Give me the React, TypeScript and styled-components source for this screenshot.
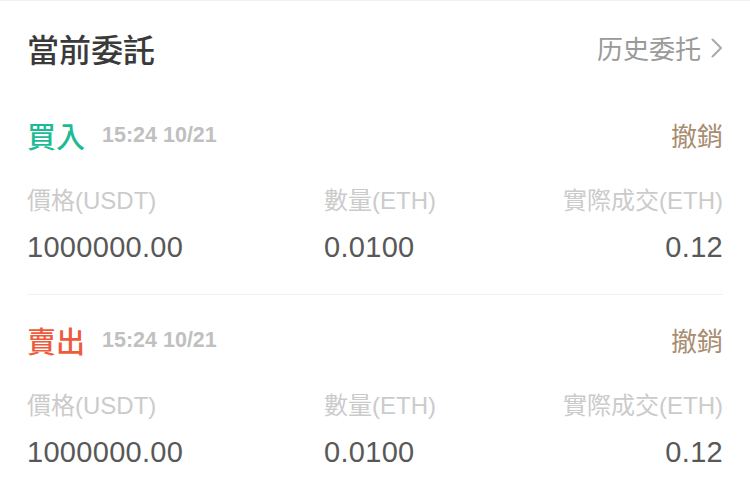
import React from "react";
import styled, { createGlobalStyle } from "styled-components";

const Global = createGlobalStyle`
  html, body { margin: 0; padding: 0; background: #fff; }
  body { font-family: "Liberation Sans", "Noto Sans CJK TC", sans-serif; }
`;

const Page = styled.div`
  width: 750px;
  border-top: 1px solid #f2f2f2;
  background: #fff;
`;

const Header = styled.div`
  height: 89px;
  padding: 5px 27px 0;
  box-sizing: border-box;
  display: flex;
  align-items: center;
  justify-content: space-between;
`;

const Title = styled.h1`
  margin: 0;
  font-family: "Noto Sans CJK TC", sans-serif;
  font-size: 32px;
  font-weight: 500;
  color: #3a3a3a;
  line-height: 40px;
`;

const HistoryLink = styled.a`
  display: flex;
  align-items: center;
  gap: 10px;
  font-family: "Noto Sans CJK TC", sans-serif;
  font-size: 26px;
  font-weight: 400;
  color: #9a9a9a;
  line-height: 36px;
  text-decoration: none;
`;

const Order = styled.section<{ $last?: boolean }>`
  margin: 0 27px;
  padding: 25px 0 29px;
  border-bottom: ${(p) => (p.$last ? "none" : "1px solid #f2f2f2")};
`;

const OrderHead = styled.div`
  display: flex;
  align-items: center;
  height: 40px;
`;

const Side = styled.span<{ $color: string }>`
  font-family: "Noto Sans CJK TC", sans-serif;
  font-size: 29px;
  font-weight: 500;
  color: ${(p) => p.$color};
  line-height: 40px;
`;

const Time = styled.span`
  margin-left: 17px;
  font-size: 21.5px;
  font-weight: 700;
  color: #c0c0c0;
  line-height: 40px;
`;

const Cancel = styled.button`
  margin-left: auto;
  padding: 0;
  border: none;
  background: none;
  font-family: "Noto Sans CJK TC", sans-serif;
  font-size: 26px;
  color: #a88d70;
  line-height: 40px;
`;

const Fields = styled.div`
  display: grid;
  grid-template-columns: 297px 1fr auto;
  margin-top: 30px;
`;

const Field = styled.div<{ $right?: boolean }>`
  display: flex;
  flex-direction: column;
  align-items: ${(p) => (p.$right ? "flex-end" : "flex-start")};
  gap: 12px;
`;

const Label = styled.span`
  font-size: 24px;
  color: #cbcbcb;
  line-height: 32px;
  white-space: nowrap;
`;

const Value = styled.span`
  font-size: 29px;
  color: #585858;
  line-height: 36px;
  letter-spacing: 0.3px;
`;

const Chevron = () => (
  <svg width="12" height="20" viewBox="0 0 12 20" fill="none">
    <path d="M1.5 1.5 L10 10 L1.5 18.5" stroke="#aaa" strokeWidth="2" strokeLinecap="round" strokeLinejoin="round" />
  </svg>
);

type OrderData = { side: string; color: string };

const orders: OrderData[] = [
  { side: "買入", color: "#1dbb94" },
  { side: "賣出", color: "#ee5b3c" },
];

export default function App() {
  return (
    <Page>
      <Global />
      <Header>
        <Title>當前委託</Title>
        <HistoryLink>
          历史委托
          <Chevron />
        </HistoryLink>
      </Header>
      {orders.map((o, i) => (
        <Order key={o.side} $last={i === orders.length - 1}>
          <OrderHead>
            <Side $color={o.color}>{o.side}</Side>
            <Time>15:24 10/21</Time>
            <Cancel>撤銷</Cancel>
          </OrderHead>
          <Fields>
            <Field>
              <Label>價格(USDT)</Label>
              <Value>1000000.00</Value>
            </Field>
            <Field>
              <Label>數量(ETH)</Label>
              <Value>0.0100</Value>
            </Field>
            <Field $right>
              <Label>實際成交(ETH)</Label>
              <Value>0.12</Value>
            </Field>
          </Fields>
        </Order>
      ))}
    </Page>
  );
}
